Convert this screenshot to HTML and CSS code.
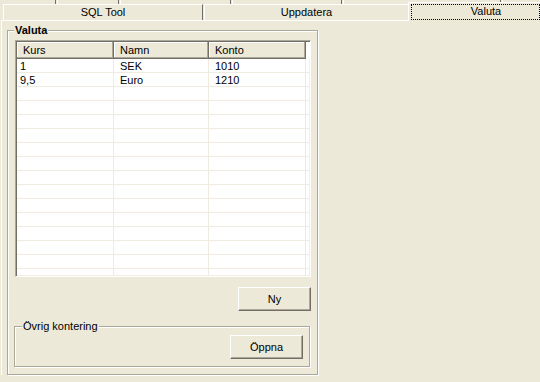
FILE: index.html
```html
<!DOCTYPE html>
<html>
<head>
<meta http-equiv="Content-Type" content="text/html; charset=UTF-8" />
<link rel="stylesheet" href="styles.css">
</head>

<body>

<div id="tabs-back">
	<span class="stub stub-1"></span>
	<span class="stub stub-2"></span>
	<span class="stub stub-3"></span>
	<span class="stub stub-4"></span>
	<span class="stub stub-5"></span>
	<span class="stub stub-6"></span>
</div>

<div id="tabs">
	<div class="tab tab-sql">SQL Tool</div>
	<div class="tab tab-upd">Uppdatera</div>
	<div class="tab tab-val"><span class="focus">Valuta</span></div>
</div>

<div id="page">
	<div class="group group-valuta">
		<span class="group-label bold">Valuta</span>

		<div id="listview">
			<div class="lv-header">
				<div class="lv-col c1">Kurs</div>
				<div class="lv-col c2">Namn</div>
				<div class="lv-col c3">Konto</div>
				<div class="lv-col c4"></div>
			</div>
			<div class="lv-body">
				<div class="lv-row"><span class="c1">1</span><span class="c2">SEK</span><span class="c3">1010</span></div>
				<div class="lv-row"><span class="c1">9,5</span><span class="c2">Euro</span><span class="c3">1210</span></div>
				<div class="lv-row"><span class="c1"></span><span class="c2"></span><span class="c3"></span></div>
				<div class="lv-row"><span class="c1"></span><span class="c2"></span><span class="c3"></span></div>
				<div class="lv-row"><span class="c1"></span><span class="c2"></span><span class="c3"></span></div>
				<div class="lv-row"><span class="c1"></span><span class="c2"></span><span class="c3"></span></div>
				<div class="lv-row"><span class="c1"></span><span class="c2"></span><span class="c3"></span></div>
				<div class="lv-row"><span class="c1"></span><span class="c2"></span><span class="c3"></span></div>
				<div class="lv-row"><span class="c1"></span><span class="c2"></span><span class="c3"></span></div>
				<div class="lv-row"><span class="c1"></span><span class="c2"></span><span class="c3"></span></div>
				<div class="lv-row"><span class="c1"></span><span class="c2"></span><span class="c3"></span></div>
				<div class="lv-row"><span class="c1"></span><span class="c2"></span><span class="c3"></span></div>
				<div class="lv-row"><span class="c1"></span><span class="c2"></span><span class="c3"></span></div>
				<div class="lv-row"><span class="c1"></span><span class="c2"></span><span class="c3"></span></div>
				<div class="lv-row"><span class="c1"></span><span class="c2"></span><span class="c3"></span></div>
				<div class="lv-row"><span class="c1"></span><span class="c2"></span><span class="c3"></span></div>
			</div>
		</div>

		<div class="button-row">
			<button class="btn">Ny</button>
		</div>

		<div class="group group-ovrig">
			<span class="group-label">Övrig kontering</span>
			<div class="button-row">
				<button class="btn">Öppna</button>
			</div>
		</div>
	</div>
</div>

</body>
</html>
```

FILE: styles.css
```css
body {
	margin: 0;
	background: #ECE9D8;
	font-family: "Liberation Sans", Arial, sans-serif;
	font-size: 11px;
	color: #000;
	height: 382px;
	overflow: hidden;
}

/* back row of tabs, only the bottom edge shows */
#tabs-back {
	display: flex;
	height: 4px;
	overflow: hidden;
}

.stub {
	flex: none;
	box-sizing: border-box;
	height: 4px;
	border-left: 1px solid #fff;
	border-right: 1px solid #716F64;
	margin-right: 1px;
}

.stub-1 { width: 56px; border-left: none; }
.stub-2 { width: 62px; }
.stub-3 { width: 111px; }
.stub-4 { width: 110px; }
.stub-5 { width: 158px; }
.stub-6 { flex: 1; border-right: none; }

/* front row */
#tabs {
	display: flex;
	height: 16px;
	padding-left: 3px;
}

.tab {
	flex: none;
	box-sizing: border-box;
	height: 16px;
	border-top: 1px solid #fff;
	border-left: 1px solid #fff;
	border-right: 1px solid #716F64;
	text-align: center;
	line-height: 15px;
	white-space: nowrap;
}

.tab-sql {
	width: 200px;
}

.tab-upd {
	width: 204px;
	margin-left: 1px;
	border-right: none;
}

.tab-val {
	flex: 1;
	min-width: 0;
	height: 19px;
	margin-top: -2px;
	padding: 1px 0 0 2px;
	border-right: none;
	background: #ECE9D8;
	position: relative;
	z-index: 1;
	line-height: 13px;
}

.tab-val .focus {
	display: block;
	box-sizing: border-box;
	height: 16px;
	padding-left: 21px;
	border: 1px dotted #000;
}

#page {
	margin-left: 1px;
	border-top: 1px solid #fff;
	border-left: 1px solid #fff;
	padding: 9px 0 0 5px;
}

.group {
	position: relative;
	box-sizing: border-box;
	border: 1px solid #ACA899;
	box-shadow: inset 1px 1px 0 #fff, 1px 1px 0 #fff;
}

.group-label {
	position: absolute;
	top: -6px;
	left: 6px;
	padding: 0 1px;
	background: #ECE9D8;
	line-height: 11px;
}

.bold {
	font-weight: bold;
}

.group-valuta {
	width: 311px;
	padding: 9px 6px 7px 7px;
}

.group-ovrig {
	width: 296px;
	margin: 15px 0 0 -1px;
	padding: 8px 6px 7px 0;
}

.group-ovrig .group-label {
	left: 7px;
}

/* list view */
#listview {
	box-sizing: border-box;
	width: 296px;
	height: 237px;
	border: 1px solid;
	border-color: #ACA899 #fff #fff #ACA899;
	box-shadow: inset 1px 1px 0 #716F64, inset -1px -1px 0 #F1EFE2;
	padding: 1px;
	background: #fff;
	overflow: hidden;
}

.lv-header {
	display: flex;
	height: 17px;
}

.lv-col {
	flex: none;
	box-sizing: border-box;
	height: 17px;
	line-height: 16px;
	padding-left: 6px;
	background: #ECE9D8;
	box-shadow: inset -1px -1px 0 #716F64, inset -2px -2px 0 #ACA899, inset 1px 1px 0 #fff;
}

.c1 { width: 97px; }
.c2 { width: 95px; }
.c3 { width: 97px; }
.lv-col.c4 { flex: 1; box-shadow: none; background: #fff; }

.lv-body {
	height: 218px;
	overflow: hidden;
}

.lv-row {
	display: flex;
	height: 14px;
	border-bottom: 1px solid #EFEBDE;
	box-sizing: border-box;
}

.lv-row span {
	flex: none;
	box-sizing: border-box;
	height: 13px;
	line-height: 14px;
	padding-left: 6px;
	border-right: 1px solid #EFEBDE;
}

.lv-row .c1 {
	padding-left: 3px;
}

.button-row {
	display: flex;
	justify-content: flex-end;
	margin-top: 10px;
}

.group-ovrig .button-row {
	margin-top: 0;
}

.btn {
	box-sizing: border-box;
	width: 73px;
	height: 24px;
	padding: 0;
	background: #ECE9D8;
	border: 1px solid;
	border-color: #fff #716F64 #716F64 #fff;
	box-shadow: inset -1px -1px 0 #ACA899;
	font-family: inherit;
	font-size: inherit;
	color: #000;
}
```
